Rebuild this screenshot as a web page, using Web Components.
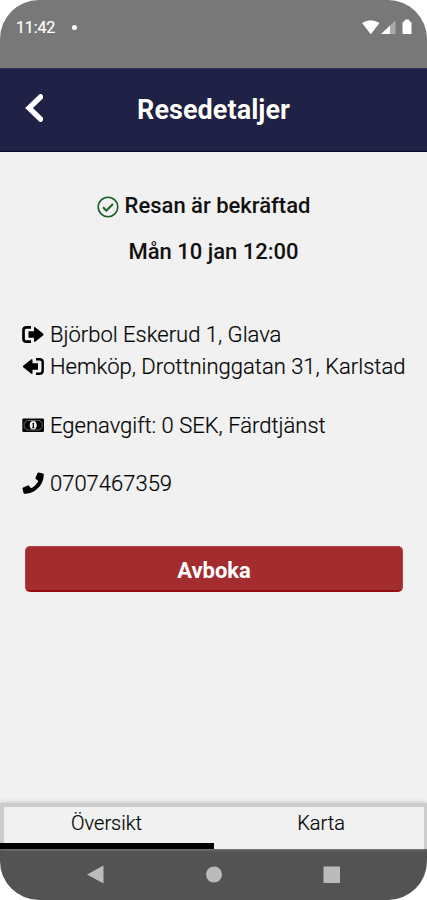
<!DOCTYPE html>
<html lang="sv"><head><meta charset="utf-8"><title>Resedetaljer</title>
<style>html,body{margin:0;background:#fff}body{font-family:Roboto,sans-serif;color:#111}</style></head>
<body><trip-screen></trip-screen>
<script>
const define=(name,html)=>customElements.define(name,class extends HTMLElement{
 constructor(){super();const t=document.createElement('template');t.innerHTML=html;this.attachShadow({mode:'open'}).append(t.content.cloneNode(true));}
});
define('status-bar',`<style>:host{display:flex;height:68px;box-sizing:border-box;padding:17px 14px 0 16px;background:#787878;color:#fff;font-size:16px;line-height:22px}
.t{flex:1;display:flex;gap:17px}.t span{letter-spacing:-.15px;-webkit-text-stroke:.2px #fff}i{width:5px;height:5px;border-radius:50%;background:#fff;margin-top:8px}svg{width:52px;height:18px;display:block;margin-top:1px}</style>
<div class="t"><span>11:42</span><i></i></div>
<svg viewBox="0 0 52 18"><path fill="#fff" d="M1 5Q9.500-.5 18.500 5L9.800 16.200Z"/><path fill="#fff" d="M20 16 29 7.500V16Z"/><path fill="#aaa" d="M29 7.500 34.500 2.500V16H29Z"/><path fill="#fff" d="M41.500 4.500 44 2.500V1.500h4v1L50.500 4.500V16H41.500z"/></svg>`);
define('title-bar',`<style>:host{display:grid;grid-template-columns:68px 1fr 68px;align-items:center;height:84px;box-sizing:border-box;background:#202147;color:#fff;border-top:1px solid #2b3352;border-bottom:1px solid #080924}
h1{margin:0;text-align:center;font-size:27px;line-height:32px;font-weight:700;letter-spacing:.05px;text-shadow:0 0 1px #000}svg{width:18px;height:28px;margin-left:25px;display:block;margin-top:-4px}</style>
<svg viewBox="0 0 18 28"><path d="M15.500 3 4 14 15.500 25" fill="none" stroke="#fff" stroke-width="5.400" stroke-linecap="square"/></svg><h1><slot></slot></h1>`);
define('trip-status',`<style>:host{display:flex;flex-direction:column;align-items:center;font-size:22px;font-weight:500;line-height:28px;gap:18px}
.r{display:flex;gap:6px;margin-right:20px;align-items:center}svg{width:22px;height:22px;margin-top:2px}</style>
<div class="r"><svg viewBox="0 0 22 22" fill="none" stroke="#175f24"><circle cx="11" cy="11" r="9.800" stroke-width="1.600"/><path d="m6 11.300 3.300 3.400L16 8" stroke-width="2"/></svg><span><slot name="state"></slot></span></div><span><slot name="time"></slot></span>`);
const icons={
depart:'<path fill="none" stroke="#000" stroke-width="2.7" d="M9 2.300H4.500Q1.500 2.300 1.500 5.300V13.700Q1.500 16.700 4.500 16.700H9"/><path d="M6.500 6.300H12V3Q12 1.500 13.500 2.500L21.300 8.700Q22 9.500 21.300 10.300L13.500 16.500Q12 17.500 12 16V12.700H6.500Z"/>',
arrive:'<path fill="none" stroke="#000" stroke-width="2.400" d="M14 2.300H17.500Q20.700 2.300 20.700 5.300V13.700Q20.700 16.700 17.500 16.700H14"/><path d="M16 6.300H10.500V3Q10.500 1.500 9 2.500L1.200 8.700Q.5 9.500 1.200 10.300L9 16.500Q10.500 17.500 10.500 16V12.700H16Z"/>',
money:'<rect x=".3" y="2.500" width="21.700" height="13.500" rx="1.300"/><path d="M4.500 4.500H18Q18 6.500 20.200 6.500V12Q18 12 18 14H4.500Q4.500 12 2.200 12V6.500Q4.500 6.500 4.500 4.500Z" fill="none" stroke="#888" stroke-width=".7"/><ellipse cx="11.200" cy="9.200" rx="3.500" ry="4.200" fill="#f1f1f1"/><path d="M10.300 7.300 12 6.500V11.500H12.500V12.200H10V11.500H10.700V8Z"/>',
phone:'<path transform="translate(.5 -1.5) scale(.0415)" d="M493.400 24.600l-104-24c-11.300-2.600-22.900 3.300-27.500 13.900l-48 112c-4.200 9.800-1.400 21.300 6.900 28l60.600 49.600c-36 76.700-98.900 140.500-177.200 177.200l-49.600-60.600c-6.800-8.300-18.200-11.100-28-6.900l-112 48C3.900 366.500-2 378.100.6 389.400l24 104C27.100 504.200 36.700 512 48 512c256.100 0 464-207.500 464-464 0-11.200-7.700-20.900-18.600-23.400z"/>'};
customElements.define('info-row',class extends HTMLElement{constructor(){super();this.attachShadow({mode:'open'}).innerHTML=`<style>:host{display:flex;align-items:center;gap:5px;height:32px;font-size:22px;font-weight:300;color:#000;line-height:30px;white-space:nowrap;-webkit-text-stroke:.2px #111}svg{flex:none;width:23px;height:20px;overflow:visible}</style><svg viewBox="0 0 23 20">${icons[this.getAttribute('icon')]}</svg><span><slot></slot></span>`}});
define('action-button',`<style>:host{display:block}button{display:block;width:100%;height:46px;box-sizing:border-box;padding:4px 0 0;border:1px solid #b04246;border-bottom:2px solid #930d13;border-radius:5px;background:#a32c2e;color:#fff;font:700 22px Roboto,sans-serif}</style><button><slot></slot></button>`);
define('tab-bar',`<style>:host{display:grid;grid-template-columns:1fr 1fr;height:46px;box-sizing:border-box;position:relative;font-size:20px;font-weight:300;color:#000;line-height:24px;text-align:center;background:#f1f1f1;border:solid #ccc;border-width:4px 3px 0 4px;box-shadow:0 -1px 4px #ccc;-webkit-text-stroke:.2px #111}
span{padding-top:4px}.a{margin:0 1px 0 -4px}.b{margin:0 -3px 0 1px}i{position:absolute;left:-4px;bottom:0;width:214px;height:6px;background:#000}</style><span class="a"><slot name="a"></slot></span><span class="b"><slot name="b"></slot></span><i></i>`);
define('nav-bar',`<style>:host{display:block;height:51px;background:#535353}svg{display:block}</style><svg width="427" height="51" fill="#bbb"><path d="M87 25.500 103.500 16.500V34.500Z"/><circle cx="214" cy="25.500" r="8"/><rect x="323.500" y="17.500" width="16.500" height="16.500" rx=".5"/></svg>`);
define('trip-screen',`<style>:host{display:flex;flex-direction:column;width:427px;height:900px;overflow:hidden;border-radius:39px;background:#f1f1f1}
main{flex:1;padding:40px 0 0}trip-status{margin-bottom:53px}.rows{padding-left:22px}info-row[icon=money]{margin-top:27px}info-row[icon=phone]{margin-top:26px}action-button{margin:46px 24px 0 25px}</style>
<status-bar></status-bar><title-bar>Resedetaljer</title-bar><main><trip-status><span slot="state">Resan är bekräftad</span><span slot="time">Mån 10 jan 12:00</span></trip-status>
<div class="rows"><info-row icon="depart">Björbol Eskerud 1, Glava</info-row><info-row icon="arrive">Hemköp, Drottninggatan 31, Karlstad</info-row><info-row icon="money">Egenavgift: 0 SEK, Färdtjänst</info-row><info-row icon="phone">0707467359</info-row></div><action-button>Avboka</action-button></main>
<tab-bar><span slot="a">Översikt</span><span slot="b">Karta</span></tab-bar><nav-bar></nav-bar>`);
</script></body></html>
